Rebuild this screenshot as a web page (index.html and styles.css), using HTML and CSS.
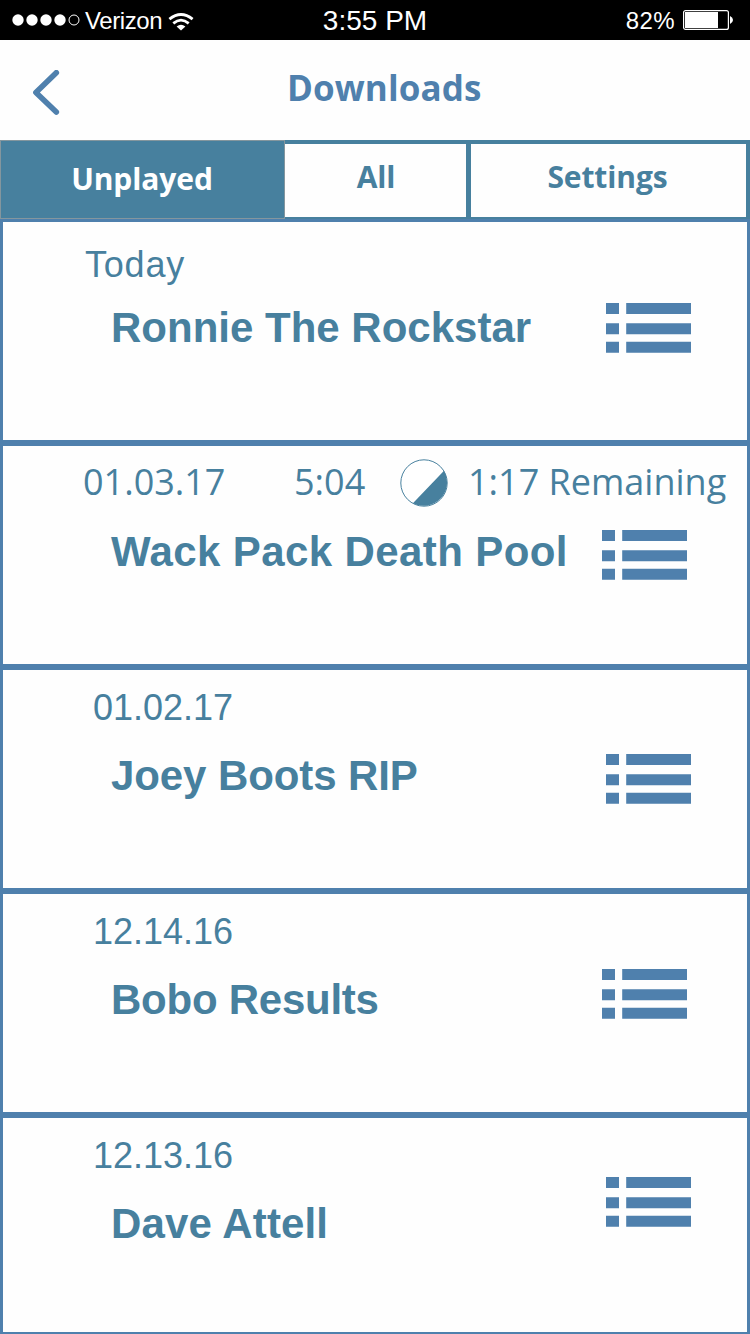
FILE: index.html
```html
<!DOCTYPE html>
<html lang="en">
<head>
<meta charset="utf-8">
<title>Downloads</title>
<link rel="stylesheet" href="styles.css">
</head>
<body>
<svg class="defs" aria-hidden="true">
  <symbol id="list-icon" viewBox="0 0 85 50">
    <path d="M0 0h13v11H0zM20.2 0H85v11H20.2zM0 20.2h13v11H0zM20.2 20.2H85v11H20.2zM0 38.8h13v11H0zM20.2 38.8H85v11H20.2z"/>
  </symbol>
</svg>
<main class="screen">
  <header class="status">
    <div class="carrier">
      <svg class="signal" viewBox="0 0 68 12"><g fill="#fff"><circle cx="6" cy="6" r="5.7"/><circle cx="20" cy="6" r="5.7"/><circle cx="34" cy="6" r="5.7"/><circle cx="48" cy="6" r="5.7"/></g><circle cx="62" cy="6" r="5" fill="none" stroke="#fff" stroke-width="1"/></svg>
      <span class="carrier-name">Verizon</span>
      <svg class="wifi" viewBox="0 0 26 18"><g fill="none" stroke="#fff" stroke-width="2.8"><path d="M1.4 6.2Q13 -3.2 24.6 6.2"/><path d="M5.3 10.3Q13 4 20.7 10.3"/></g><path d="M8.6 13.4Q13 10 17.4 13.4L13 17.6Z" fill="#fff"/></svg>
    </div>
    <span class="clock">3:55 PM</span>
    <div class="power">
      <span class="percent">82%</span>
      <svg class="battery" viewBox="0 0 50 20"><rect x=".6" y=".6" width="44.8" height="18.8" rx="2" fill="none" stroke="#fff" stroke-width="1.2"/><path d="M2 2h33v16H2z" fill="#fff"/><path d="M47 6q3 1.5 3 4t-3 4z" fill="#fff"/></svg>
    </div>
  </header>
  <nav class="navbar">
    <svg class="back" viewBox="0 0 28 46"><path d="M24.3 2.7L3.9 22.4L24.3 42" fill="none" stroke="#4f80ad" stroke-width="5.6" stroke-linecap="round" stroke-linejoin="round"/></svg>
    <h1 class="title">Downloads</h1>
  </nav>
  <div class="tabs">
    <span class="tab tab-active">Unplayed</span>
    <span class="tab tab-all">All</span>
    <span class="tab tab-settings">Settings</span>
  </div>
  <ul class="list">
    <li class="row">
      <div class="meta meta-today"><span>Today</span></div>
      <h2 class="name n1">Ronnie The Rockstar</h2>
      <svg class="handle h1"><use href="#list-icon"/></svg>
    </li>
    <li class="row">
      <div class="meta meta-progress"><span class="date">01.03.17</span><span class="length">5:04</span>
        <svg class="pie" viewBox="0 0 48 48"><circle cx="24" cy="24" r="23.2" fill="#fff" stroke="#47809e" stroke-width="1"/><path d="M44 11.7A23.5 23.5 0 0 1 12.9 44.2Z" fill="#47809e"/></svg>
        <span class="remaining">1:17 Remaining</span></div>
      <h2 class="name n2">Wack Pack Death Pool</h2>
      <svg class="handle h2"><use href="#list-icon"/></svg>
    </li>
    <li class="row">
      <div class="meta meta-date"><span>01.02.17</span></div>
      <h2 class="name n3">Joey Boots RIP</h2>
      <svg class="handle h3"><use href="#list-icon"/></svg>
    </li>
    <li class="row">
      <div class="meta meta-date"><span>12.14.16</span></div>
      <h2 class="name n4">Bobo Results</h2>
      <svg class="handle h4"><use href="#list-icon"/></svg>
    </li>
    <li class="row row-last">
      <div class="meta meta-date"><span>12.13.16</span></div>
      <h2 class="name n5">Dave Attell</h2>
      <svg class="handle h5"><use href="#list-icon"/></svg>
    </li>
  </ul>
</main>
</body>
</html>
```
FILE: styles.css
```css
* { box-sizing: border-box; margin: 0; padding: 0; }
body { background: #fff; }
.defs { display: none; }
.screen { width: 750px; height: 1334px; overflow: hidden; display: flex; flex-direction: column; background: #fefefe; color: #47809e; font-family: "Liberation Sans", sans-serif; white-space: nowrap; }
.status { flex: none; height: 40px; background: #000; color: #fff; display: grid; grid-template-columns: 1fr 106px 1fr; grid-template-rows: 40px; font-size: 24px; line-height: 40px; }
.carrier { display: flex; align-items: center; padding-left: 12px; }
.signal { width: 68px; height: 12px; }
.carrier-name { margin-left: 5px; width: 79px; letter-spacing: -.4px; padding-top: 2px; }
.wifi { width: 26px; height: 18px; margin-left: 4px; margin-top: 3px; }
.clock { font-size: 28px; text-align: center; padding-top: 1px; }
.power { display: flex; align-items: center; justify-content: flex-end; padding-right: 17px; }
.percent { margin-right: 8px; letter-spacing: .4px; padding-top: 2px; }
.battery { width: 50px; height: 20px; }
.navbar { flex: none; height: 100px; display: flex; align-items: flex-start; }
.back { width: 28px; height: 46px; margin: 30px 0 0 32px; }
.title { margin: 24px 0 0 227px; font: bold 35px/48px "Open Sans", sans-serif; letter-spacing: .1px; color: #4f80ad; }
.tabs { flex: none; height: 79px; display: grid; grid-template-columns: 285px 183px 282px; font: bold 30px/40px "Open Sans", sans-serif; letter-spacing: -.1px; }
.tab { border: solid #47809e; text-align: center; }
.tab-active { background: #47809e; border: 1px solid #84969e; color: #fff; padding: 18px 1px 0 0; }
.tab-all { border-width: 4px 2px 2px 0; padding: 13px 0 0 1px; }
.tab-settings { border-width: 4px 4px 2px 3px; padding: 13px 2px 0 0; }
.list { list-style: none; }
.row { height: 224px; border: 3px solid #4f80ad; display: grid; grid-template-columns: 1fr 142px; grid-template-rows: 78px 140px; }
.row-last { height: 220px; }
.meta { grid-column: 1 / 3; height: 78px; font-size: 36px; line-height: 42px; display: flex; }
.meta-today { padding: 22px 0 0 82px; letter-spacing: .8px; }
.meta-date { padding: 17px 0 0 90px; }
.meta-progress { padding: 15px 0 0 80px; font-family: "Open Sans", sans-serif; font-weight: 400; }
.date { width: 211px; }
.length { width: 106px; }
.pie { width: 48px; height: 48px; margin: -2px 20px 0 0; }
.name { font-size: 42px; line-height: 48px; padding: 4px 0 0 108px; }
.n2 { letter-spacing: .4px; }
.n3 { letter-spacing: -.1px; }
.n4 { letter-spacing: -.25px; }
.n5 { letter-spacing: .15px; }
.handle { width: 85px; height: 50px; fill: #4f80ad; }
.h1 { margin: 3px 0 0 1px; }
.h2 { margin: 6px 0 0 -3px; }
.h3 { margin: 6px 0 0 1px; }
.h4 { margin: -3px 0 0 -3px; }
.h5 { margin: -19px 0 0 1px; }
```
